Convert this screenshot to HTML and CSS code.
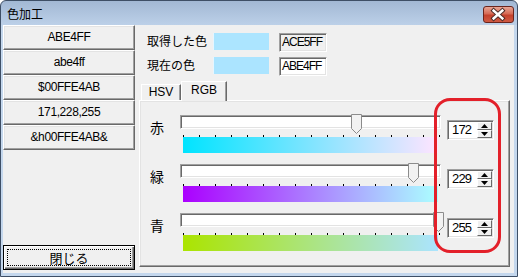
FILE: index.html
```html
<!DOCTYPE html>
<html lang="ja">
<head>
    <meta charset="UTF-8">
    <title>色加工</title>
    <link rel="stylesheet" href="styles.css">
</head>
<body>
    <div class="window">
        <div class="titlebar">
            <span class="title">色加工</span>
            <span class="close-x">
                <svg width="31" height="17" viewBox="0 0 31 17">
                    <path d="M11 4.5 L20 12.5 M20 4.5 L11 12.5" stroke="#4a2a26" stroke-width="4.6" stroke-linecap="square"/>
                    <path d="M11 4.5 L20 12.5 M20 4.5 L11 12.5" stroke="#fff" stroke-width="2.6" stroke-linecap="square"/>
                </svg>
            </span>
        </div>

        <div class="client">
            <!-- 左: 形式ボタン -->
            <div class="side">
                <div class="btn">ABE4FF</div>
                <div class="btn">abe4ff</div>
                <div class="btn">$00FFE4AB</div>
                <div class="btn">171,228,255</div>
                <div class="btn">&amp;h00FFE4AB&amp;</div>
                <div class="btn btn-close"><span class="focus">閉じる</span></div>
            </div>

            <!-- 右: 色 -->
            <div class="main">
                <div class="color-rows">
                    <div class="color-row">
                        <span class="color-label">取得した色</span>
                        <span class="swatch" style="background:#ace5ff"></span>
                        <span class="field field-readonly">ACE5FF</span>
                    </div>
                    <div class="color-row">
                        <span class="color-label">現在の色</span>
                        <span class="swatch" style="background:#abe4ff"></span>
                        <span class="field">ABE4FF</span>
                    </div>
                </div>

                <div class="tabs">
                    <span class="tab">HSV</span>
                    <span class="tab tab-active">RGB</span>
                </div>

                <div class="panel">
                    <div class="channel">
                        <span class="channel-label">赤</span>
                        <div class="slider">
                            <div class="track"></div>
                            <svg class="thumb" style="left:171px" width="11" height="20" viewBox="0 0 11 20">
                                <path d="M0.5 0.5 H10.5 V14.5 L5.5 19.5 L0.5 14.5 Z" fill="#f2f2f2" stroke="#8c8c8c"/>
                            </svg>
                            <div class="ticks"></div>
                            <div class="grad grad-r"></div>
                        </div>
                        <div class="spin">
                            <span class="spin-value">172</span>
                            <span class="spin-btns">
                                <span class="spin-btn"><svg width="7" height="4" viewBox="0 0 7 4"><path d="M3.5 0 L7 4 H0 Z"/></svg></span>
                                <span class="spin-btn"><svg width="7" height="4" viewBox="0 0 7 4"><path d="M0 0 H7 L3.5 4 Z"/></svg></span>
                            </span>
                        </div>
                    </div>
                    <div class="channel">
                        <span class="channel-label">緑</span>
                        <div class="slider">
                            <div class="track"></div>
                            <svg class="thumb" style="left:228px" width="11" height="20" viewBox="0 0 11 20">
                                <path d="M0.5 0.5 H10.5 V14.5 L5.5 19.5 L0.5 14.5 Z" fill="#f2f2f2" stroke="#8c8c8c"/>
                            </svg>
                            <div class="ticks"></div>
                            <div class="grad grad-g"></div>
                        </div>
                        <div class="spin">
                            <span class="spin-value">229</span>
                            <span class="spin-btns">
                                <span class="spin-btn"><svg width="7" height="4" viewBox="0 0 7 4"><path d="M3.5 0 L7 4 H0 Z"/></svg></span>
                                <span class="spin-btn"><svg width="7" height="4" viewBox="0 0 7 4"><path d="M0 0 H7 L3.5 4 Z"/></svg></span>
                            </span>
                        </div>
                    </div>
                    <div class="channel">
                        <span class="channel-label">青</span>
                        <div class="slider">
                            <div class="track"></div>
                            <svg class="thumb" style="left:253px" width="11" height="20" viewBox="0 0 11 20">
                                <path d="M0.5 0.5 H10.5 V14.5 L5.5 19.5 L0.5 14.5 Z" fill="#f2f2f2" stroke="#8c8c8c"/>
                            </svg>
                            <div class="ticks"></div>
                            <div class="grad grad-b"></div>
                        </div>
                        <div class="spin">
                            <span class="spin-value">255</span>
                            <span class="spin-btns">
                                <span class="spin-btn"><svg width="7" height="4" viewBox="0 0 7 4"><path d="M3.5 0 L7 4 H0 Z"/></svg></span>
                                <span class="spin-btn"><svg width="7" height="4" viewBox="0 0 7 4"><path d="M0 0 H7 L3.5 4 Z"/></svg></span>
                            </span>
                        </div>
                    </div>
                </div>
            </div>
        </div>

        <!-- 赤枠の注釈 -->
        <div class="note-ring"></div>
    </div>
</body>
</html>
```

FILE: styles.css
```css
*{
    margin: 0;
    padding: 0;
    box-sizing: border-box;
}
body{
    margin: 0;
    background: #fff;
    font-family: "Liberation Sans", "Noto Sans CJK JP", sans-serif;
    font-size: 12px;
    color: #000;
}
.window{
    position: relative;
    width: 518px;
    height: 277px;
    border: 1px solid #3e4f66;
    border-radius: 6px 6px 0 0;
    background: linear-gradient(#a2b8d4, #bcd0e8 24px, #c4d7ed 24px);
    padding: 0 3px 3px 2px;
    display: flex;
    flex-direction: column;
}
/* タイトルバー */
.titlebar{
    height: 24px;
    display: flex;
    align-items: center;
    padding-left: 4px;
}
.title{
    flex: 1;
    font-family: "Noto Sans CJK JP", sans-serif;
    font-size: 12px;
}
.close-x{
    width: 31px;
    height: 17px;
    margin-top: 3px;
    border: 1px solid #6a241c;
    border-radius: 3px;
    background: linear-gradient(#e7a595, #d66a55 45%, #c4412c 55%, #cf5a43);
    display: flex;
    align-items: center;
    justify-content: center;
    overflow: hidden;
}
.close-x svg{
    display: block;
    margin-left: -1px;
}
.client{
    flex: 1;
    display: flex;
    background: #f0f0f0;
}
/* 左の列 */
.side{
    width: 132px;
    display: flex;
    flex-direction: column;
}
.btn{
    height: 25px;
    line-height: 22px;
    text-align: center;
    letter-spacing: -0.4px;
    background: #f0f0f0;
    border: 1px solid;
    border-color: #fff #696969 #696969 #fff;
    box-shadow: inset -1px -1px #a0a0a0, inset 1px 1px #e3e3e3;
}
.btn-close{
    margin-top: auto;
    margin-bottom: 3px;
    padding: 3px;
    line-height: normal;
    letter-spacing: 0;
    border: 1px solid #000;
    box-shadow: inset 1px 1px #fff, inset -1px -1px #696969, inset -2px -2px #a0a0a0;
}
.focus{
    display: block;
    height: 100%;
    border: 1px dotted #000;
    font-family: "Noto Sans CJK JP", sans-serif;
    font-size: 13px;
    line-height: 15px;
}
/* 右の列 */
.main{
    flex: 1;
    display: flex;
    flex-direction: column;
    padding: 8px 4px 6px 4px;
}
.color-rows{
    display: flex;
    flex-direction: column;
    gap: 5px;
    padding-left: 8px;
}
.color-row{
    display: flex;
    align-items: flex-start;
    height: 19px;
}
.color-label{
    width: 66px;
    font-family: "Noto Sans CJK JP", sans-serif;
    font-size: 12px;
    line-height: 15px;
}
.swatch{
    width: 56px;
    height: 17px;
    border-left: 1px solid #e6f6ff;
}
.field{
    width: 48px;
    height: 19px;
    margin-left: 10px;
    padding-left: 2px;
    line-height: 16px;
    letter-spacing: -1px;
    background: #fff;
    border: 1px solid;
    border-color: #a0a0a0 #fff #fff #a0a0a0;
    box-shadow: inset 1px 1px #696969, inset -1px -1px #e3e3e3;
}
.field-readonly{
    background: #f0f0f0;
}
/* タブ */
.tabs{
    display: flex;
    align-items: flex-end;
    height: 19px;
    margin: 5px 0 0 2px;
    position: relative;
    z-index: 1;
}
.tab{
    width: 40px;
    height: 16px;
    line-height: 13px;
    padding-top: 1px;
    text-align: center;
    border: 1px solid;
    border-bottom: none;
    border-color: #fff #696969 #fff #fff;
    box-shadow: inset -1px 0 #a0a0a0;
}
.tab-active{
    width: 46px;
    height: 20px;
    margin-bottom: -1px;
    line-height: 15px;
    background: #f0f0f0;
}
.panel{
    flex: 1;
    display: flex;
    flex-direction: column;
    gap: 11px;
    padding: 14px 0 0 10px;
    border: 1px solid;
    border-color: #fff #696969 #696969 #fff;
    box-shadow: inset -1px -1px #a0a0a0, inset 1px 1px #e3e3e3;
}
.channel{
    display: flex;
    align-items: flex-start;
}
.channel-label{
    width: 30px;
    margin-top: 3px;
    font-family: "Noto Sans CJK JP", sans-serif;
    font-size: 14px;
    line-height: 18px;
}
.slider{
    width: 261px;
    position: relative;
}
.track{
    height: 14px;
    background: #fff;
    border: 1px solid;
    border-color: #a0a0a0 #fff #fff #a0a0a0;
    box-shadow: inset 1px 1px #696969, inset -1px -1px #e3e3e3;
}
.thumb{
    position: absolute;
    top: -1px;
    display: block;
}
.ticks{
    width: 257px;
    height: 2px;
    margin: 6px 0 0 3px;
    background: repeating-linear-gradient(to right, #000 0 1px, transparent 1px 16px);
}
.grad{
    width: 255px;
    height: 16px;
    margin-left: 3px;
}
.grad-r{
    background: linear-gradient(to right, #00e4ff, #ffe4ff);
}
.grad-g{
    background: linear-gradient(to right, #ab00ff, #abffff);
}
.grad-b{
    background: linear-gradient(to right, #abe400, #abe4ff);
}
/* スピンボックス */
.spin{
    width: 47px;
    height: 20px;
    margin: 5px 0 0 6px;
    display: flex;
    background: #fff;
    border: 1px solid;
    border-color: #a0a0a0 #fff #fff #a0a0a0;
    box-shadow: inset 1px 1px #696969, inset -1px -1px #e3e3e3;
    padding: 1px;
}
.spin-value{
    flex: 1;
    padding-left: 3px;
    font-size: 13px;
    line-height: 16px;
    letter-spacing: -0.8px;
}
.spin-btns{
    width: 15px;
    display: flex;
    flex-direction: column;
}
.spin-btn{
    height: 8px;
    display: flex;
    align-items: center;
    justify-content: center;
    background: #f0f0f0;
    border: 1px solid;
    border-color: #fff #696969 #696969 #fff;
}
.spin-btn svg{
    display: block;
}
.note-ring{
    position: absolute;
    left: 433px;
    top: 97px;
    width: 67px;
    height: 155px;
    border: 3px solid #e3202a;
    border-radius: 16px;
}
```
